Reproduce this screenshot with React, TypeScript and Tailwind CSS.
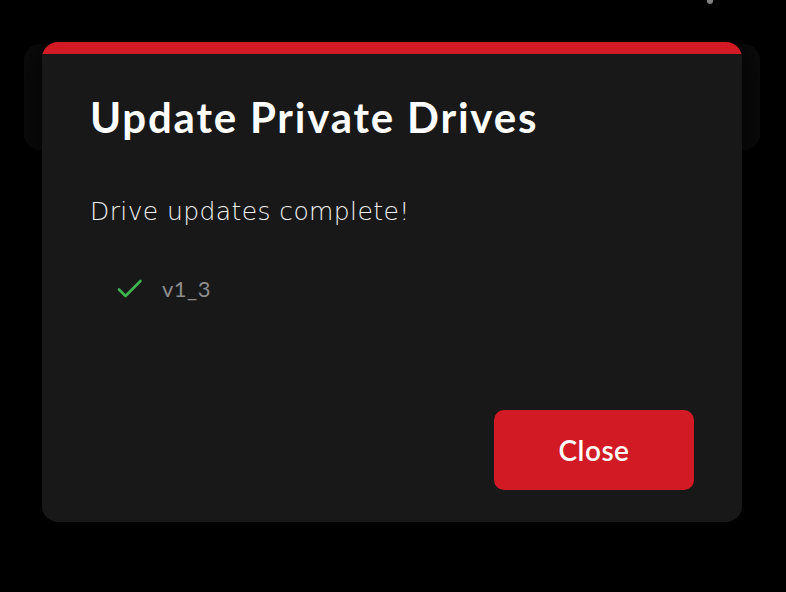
import React from "react";

const CheckIcon = () => (
  <svg width="26" height="20" viewBox="0 0 26 20" fill="none">
    <path
      d="M2 10.5 L8.5 17 L23.5 2"
      stroke="#3fb54f"
      strokeWidth="2.6"
      strokeLinecap="round"
      strokeLinejoin="round"
    />
  </svg>
);

interface DriveRowProps {
  name: string;
}

const DriveRow: React.FC<DriveRowProps> = ({ name }) => (
  <li className="flex items-center gap-[19px]">
    <CheckIcon />
    <span className="text-[22px] font-normal leading-none tracking-[0.5px] text-[#8e8e8e]">
      {name}
    </span>
  </li>
);

export default function App() {
  return (
    <div
      className="relative h-[592px] w-[786px] overflow-hidden bg-black"
      style={{ fontFamily: "Lato, 'Noto Sans', sans-serif" }}
    >
      <div className="absolute left-[707px] top-[-3px] h-[7px] w-[6px] rounded-full bg-[#8a8a8a]" />

      {/* page content behind the dialog */}
      <div className="px-[24px] pt-[44px]">
        <div className="h-[106px] w-[736px] rounded-[16px] bg-[#0d0d0d]" />
      </div>

      {/* dialog */}
      <div className="absolute left-[42px] top-[42px] flex h-[480px] w-[700px] flex-col overflow-hidden rounded-[16px] bg-[#181818] shadow-[0_0_44px_12px_rgba(0,0,0,0.75)]">
        <div className="h-[12px] bg-[#d21a24]" />
        <div className="flex flex-1 flex-col px-[48px] pb-[32px] pt-[42px]">
          <h1 className="text-[42px] font-bold leading-none tracking-[1.8px] text-white">
            Update Private Drives
          </h1>
          <p className="mt-[61px] font-['DejaVu_Sans',sans-serif] text-[25px] font-extralight leading-none tracking-[0.4px] text-[#f2f2f2]">
            Drive updates complete!
          </p>
          <ul className="mt-[54px] pl-[27px]">
            <DriveRow name="v1_3" />
          </ul>
          <div className="mt-auto flex justify-end">
            <button className="h-[80px] w-[200px] rounded-[10px] bg-[#d21a24] text-[28px] font-semibold tracking-[0.5px] text-white">
              Close
            </button>
          </div>
        </div>
      </div>
    </div>
  );
}
